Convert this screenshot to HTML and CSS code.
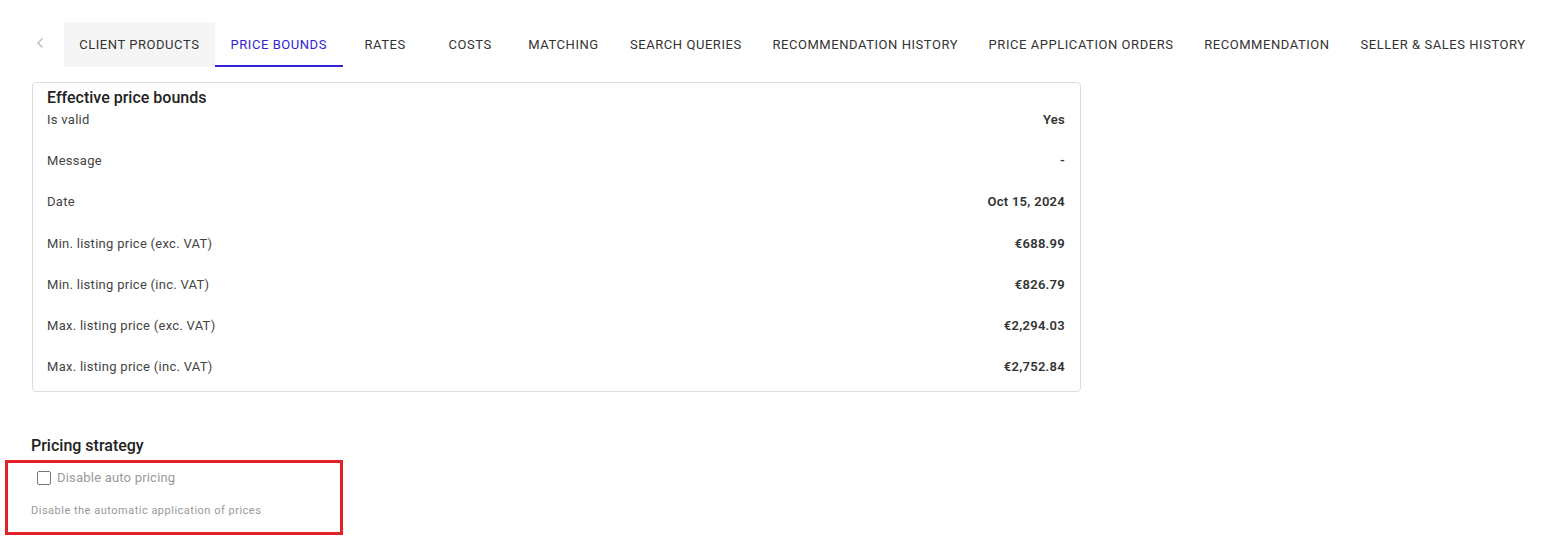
FILE: index.html
```html
<!DOCTYPE html>
<html lang="en">
<head>
    <meta charset="UTF-8">
    <title>Price bounds</title>
    <link rel="stylesheet" href="styles.css">
</head>
<body>
    <div class="tabs">
        <button class="tab-scroll" aria-label="Scroll left">
            <svg width="8" height="12" viewBox="0 0 8 12"><path d="M6.5 1.5 2 6l4.5 4.5" fill="none" stroke="#bbb" stroke-width="1.4"/></svg>
        </button>
        <div class="tab hovered">Client products</div>
        <div class="tab active">Price bounds</div>
        <div class="tab">Rates</div>
        <div class="tab">Costs</div>
        <div class="tab">Matching</div>
        <div class="tab">Search queries</div>
        <div class="tab">Recommendation history</div>
        <div class="tab">Price application orders</div>
        <div class="tab">Recommendation</div>
        <div class="tab">Seller &amp; sales history</div>
    </div>

    <div class="card">
        <h3 class="card-title">Effective price bounds</h3>
        <div class="rows">
            <div class="row"><span>Is valid</span><b>Yes</b></div>
            <div class="row"><span>Message</span><b>-</b></div>
            <div class="row"><span>Date</span><b>Oct 15, 2024</b></div>
            <div class="row"><span>Min. listing price (exc. VAT)</span><b>€688.99</b></div>
            <div class="row"><span>Min. listing price (inc. VAT)</span><b>€826.79</b></div>
            <div class="row"><span>Max. listing price (exc. VAT)</span><b>€2,294.03</b></div>
            <div class="row"><span>Max. listing price (inc. VAT)</span><b>€2,752.84</b></div>
        </div>
    </div>

    <h3 class="section-title">Pricing strategy</h3>
    <div class="highlight">
        <label class="check">
            <span class="box"></span>
            Disable auto pricing
        </label>
        <div class="helper">Disable the automatic application of prices</div>
    </div>
</body>
</html>
```

FILE: styles.css
```css
body {
    margin: 0;
    font-family: Roboto, "Liberation Sans", sans-serif;
    color: #333;
    background: #fff;
}

/* tabs */
.tabs {
    display: flex;
    align-items: stretch;
    margin-top: 22px;
    padding-left: 20px;
    height: 45px;
}
.tab-scroll {
    width: 40px;
    margin-right: 4px;
    border: 0;
    background: none;
    display: flex;
    align-items: center;
    justify-content: center;
    padding: 0 0 4px 0;
}
.tab {
    min-width: 85px;
    box-sizing: border-box;
    padding: 2px 16px 0 16px;
    display: flex;
    align-items: center;
    justify-content: center;
    font-size: 13px;
    letter-spacing: 0.55px;
    text-transform: uppercase;
    color: #333;
    border-bottom: 2px solid transparent;
    white-space: nowrap;
}
.tab.hovered {
    background-color: #f5f5f5;
}
.tab.active {
    color: #3323d6;
    border-bottom-color: #3323d6;
}

/* card */
.card {
    margin: 15px 0 0 32px;
    width: 1049px;
    box-sizing: border-box;
    border: 1px solid #ddd;
    border-radius: 4px;
    padding: 5px 15px 14px 14px;
}
.card-title {
    margin: 0 0 2px 0;
    font-size: 16px;
    line-height: 20px;
    font-weight: 500;
    color: #222;
}
.rows {
    display: grid;
    row-gap: 21.2px;
}
.row {
    display: flex;
    justify-content: space-between;
    font-size: 13px;
    line-height: 20px;
    letter-spacing: 0.28px;
    color: #444;
}
.row b {
    font-weight: 600;
    color: #333;
}

/* pricing strategy */
.section-title {
    margin: 44px 0 4px 31px;
    font-size: 16px;
    line-height: 20px;
    font-weight: 500;
    color: #222;
}
.highlight {
    margin-left: 5px;
    width: 338px;
    height: 75px;
    box-sizing: border-box;
    border: 3px solid #e3212a;
    padding: 5px 0 0 23px;
}
.check {
    display: flex;
    align-items: center;
    gap: 6px;
    margin-left: 6px;
    font-size: 13px;
    line-height: 20px;
    letter-spacing: 0.2px;
    color: #999;
}
.box {
    width: 14px;
    height: 14px;
    box-sizing: border-box;
    border: 1.5px solid #777;
    border-radius: 2px;
}
.helper {
    margin-top: 15px;
    font-size: 11px;
    line-height: 16px;
    letter-spacing: 0.5px;
    color: #999;
}
```
